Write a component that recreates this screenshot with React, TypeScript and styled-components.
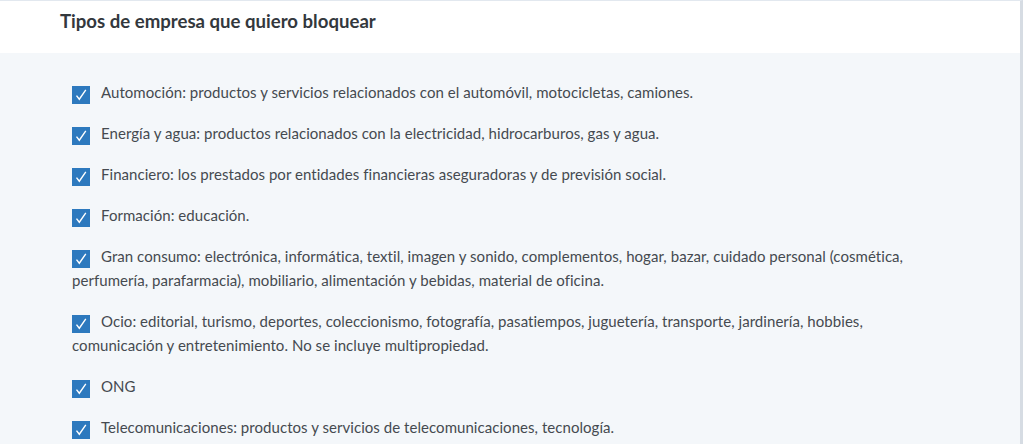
import React from 'react';
import styled, { createGlobalStyle } from 'styled-components';

const GlobalStyle = createGlobalStyle`
  html, body {
    margin: 0;
    padding: 0;
    background: #f4f7fa;
  }
  body {
    font-family: Lato, "Open Sans", sans-serif;
    color: #444a50;
  }
`;

const sectors = [
  'Automoción: productos y servicios relacionados con el automóvil, motocicletas, camiones.',
  'Energía y agua: productos relacionados con la electricidad, hidrocarburos, gas y agua.',
  'Financiero: los prestados por entidades financieras aseguradoras y de previsión social.',
  'Formación: educación.',
  'Gran consumo: electrónica, informática, textil, imagen y sonido, complementos, hogar, bazar, cuidado personal (cosmética, perfumería, parafarmacia), mobiliario, alimentación y bebidas, material de oficina.',
  'Ocio: editorial, turismo, deportes, coleccionismo, fotografía, pasatiempos, juguetería, transporte, jardinería, hobbies, comunicación y entretenimiento. No se incluye multipropiedad.',
  'ONG',
  'Telecomunicaciones: productos y servicios de telecomunicaciones, tecnología.',
];

const App: React.FC = () => {
  return (
    <>
      <GlobalStyle />
      <Page>
        <Header>
          <Title>Tipos de empresa que quiero bloquear</Title>
        </Header>
        <List>
          {sectors.map((text) => (
            <Item key={text}>
              <Check aria-hidden>
                <svg width="12" height="12" viewBox="0 0 12 12">
                  <path d="M1.5 6.6 L4.3 10.2 L10.8 0.8" fill="none" stroke="#fff" strokeWidth="1.4" />
                </svg>
              </Check>
              {text}
            </Item>
          ))}
        </List>
      </Page>
    </>
  );
};

const Page = styled.div`
  width: 1020px;
  min-height: 444px;
  border-right: 3px solid #d6dce3;
  border-top: 1px solid #e2e8ef;
  background: #f4f7fa;
`;

const Header = styled.div`
  height: 52px;
  background: #fff;
  display: flex;
  align-items: center;
  padding-left: 60px;
`;

const Title = styled.h2`
  margin: 0;
  margin-top: -13px;
  font-size: 18.6px;
  font-weight: 700;
  color: #33383d;
`;

const List = styled.ul`
  list-style: none;
  margin: 0;
  padding: 27px 80px 0 72px;
  display: flex;
  flex-direction: column;
  gap: 17px;
`;

const Item = styled.li`
  font-size: 15px;
  letter-spacing: 0.05px;
  line-height: 24px;
  color: #454a50;
`;

const Check = styled.span`
  display: inline-flex;
  align-items: center;
  justify-content: center;
  width: 18px;
  height: 18px;
  background: #2d79be;
  vertical-align: -3px;
  margin-right: 11px;
`;

export default App;
